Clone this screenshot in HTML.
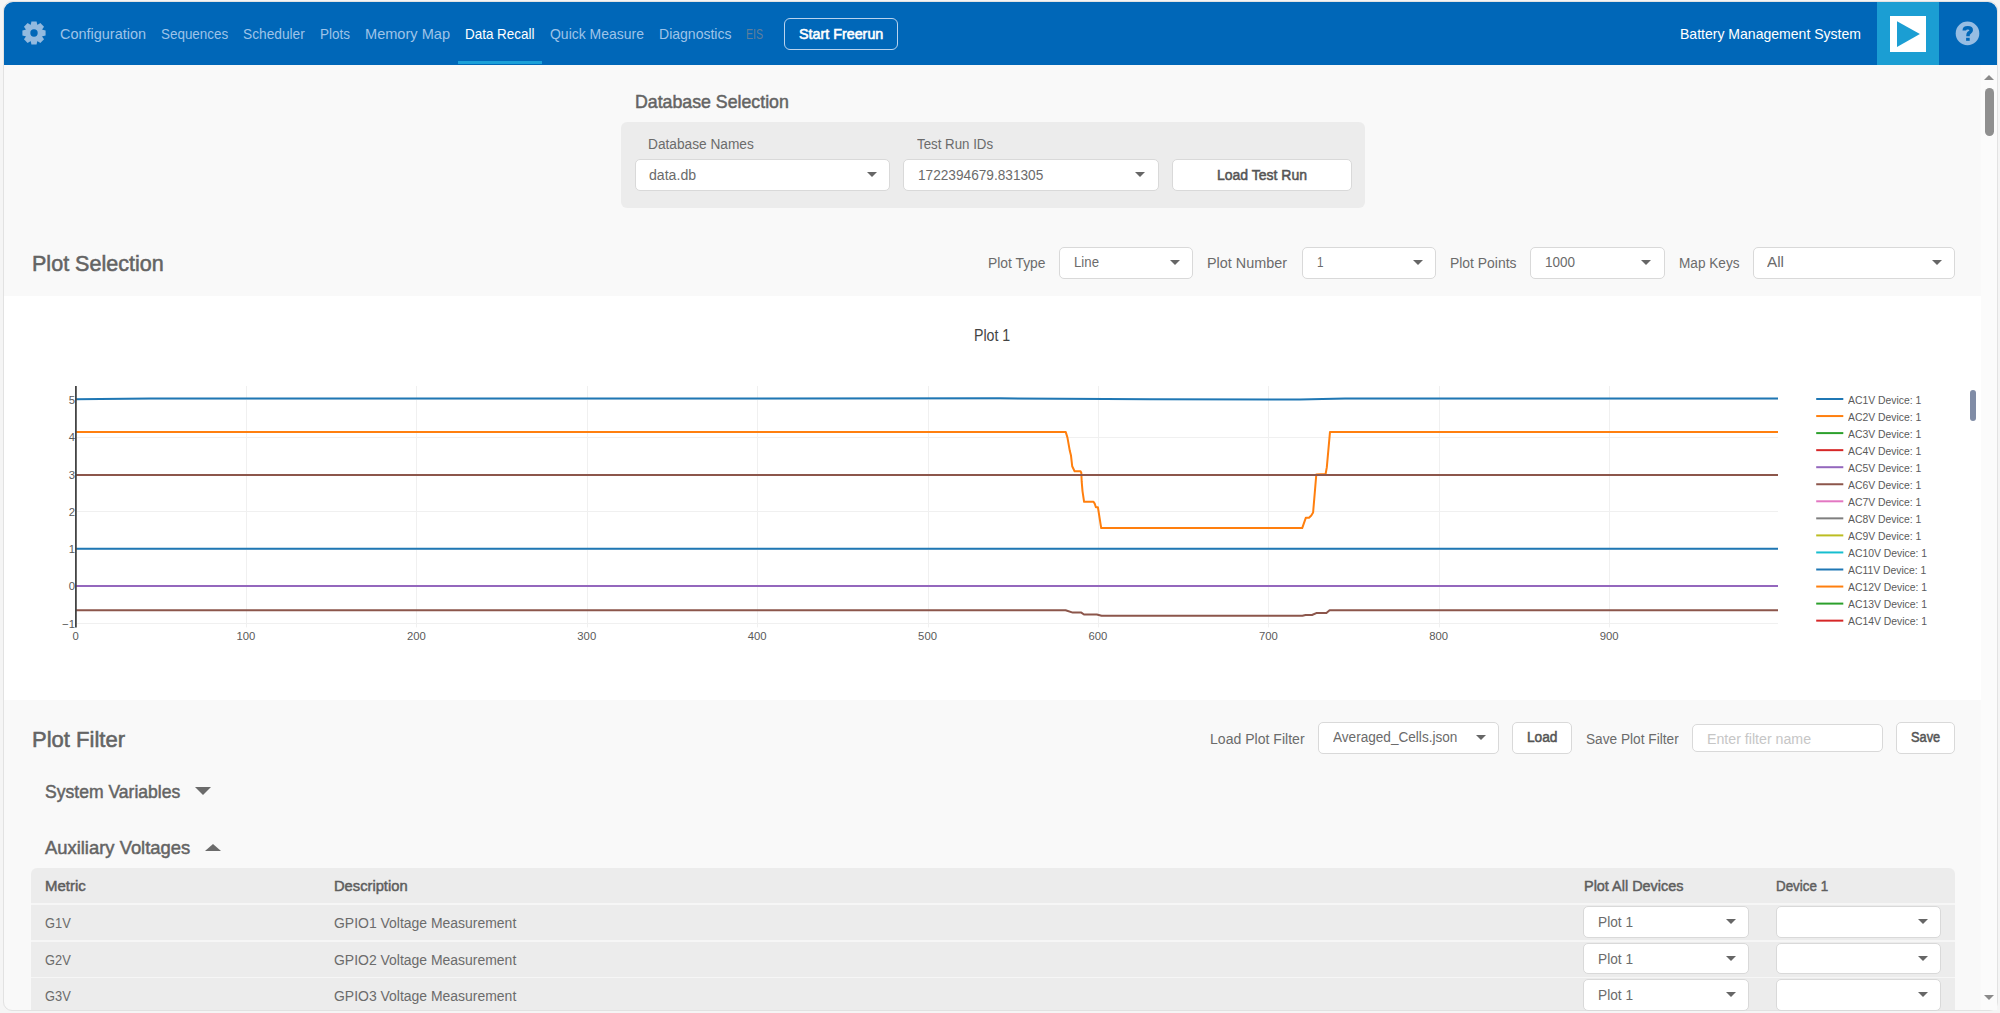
<!DOCTYPE html>
<html><head><meta charset="utf-8"><title>Battery Management System</title>
<style>
html,body{margin:0;padding:0;}
body{width:2000px;height:1013px;overflow:hidden;background:#f5f5f5;position:relative;font-family:"Liberation Sans",sans-serif;}
.t{position:absolute;white-space:nowrap;line-height:1;transform-origin:0 0;}
.r{position:absolute;}
svg{position:absolute;}
</style></head><body>

<div class="r" style="left:3px;top:1px;width:1995px;height:1010px;background:#f9f9f9;border:1px solid #e2e2e2;border-radius:9px;box-sizing:border-box;"></div>
<div class="r" style="left:4px;top:2px;width:1993px;height:63px;background:#0067b8;border-radius:9px 9px 0 0;"></div>
<svg style="left:19.5px;top:19.4px" width="28" height="28" viewBox="-14 -14 28 28">
<g fill="#93badf"><circle r="8.9"/><polygon points="3.40,-7.50 2.60,-11.60 -2.60,-11.60 -3.40,-7.50"/><polygon points="7.71,-2.90 10.04,-6.36 6.36,-10.04 2.90,-7.71"/><polygon points="7.50,3.40 11.60,2.60 11.60,-2.60 7.50,-3.40"/><polygon points="2.90,7.71 6.36,10.04 10.04,6.36 7.71,2.90"/><polygon points="-3.40,7.50 -2.60,11.60 2.60,11.60 3.40,7.50"/><polygon points="-7.71,2.90 -10.04,6.36 -6.36,10.04 -2.90,7.71"/><polygon points="-7.50,-3.40 -11.60,-2.60 -11.60,2.60 -7.50,3.40"/><polygon points="-2.90,-7.71 -6.36,-10.04 -10.04,-6.36 -7.71,-2.90"/></g><circle r="3.7" fill="#0067b8"/></svg>
<div class="t" style="left:60.00px;top:26.30px;font-size:15px;color:#9ec3e8;transform:scaleX(0.9638);">Configuration</div>
<div class="t" style="left:160.80px;top:26.30px;font-size:15px;color:#9ec3e8;transform:scaleX(0.8953);">Sequences</div>
<div class="t" style="left:243.00px;top:26.30px;font-size:15px;color:#9ec3e8;transform:scaleX(0.9149);">Scheduler</div>
<div class="t" style="left:320.00px;top:26.30px;font-size:15px;color:#9ec3e8;transform:scaleX(0.8996);">Plots</div>
<div class="t" style="left:365.00px;top:26.30px;font-size:15px;color:#9ec3e8;transform:scaleX(0.9712);">Memory Map</div>
<div class="t" style="left:465.10px;top:26.30px;font-size:15px;color:#ffffff;transform:scaleX(0.8951);">Data Recall</div>
<div class="t" style="left:549.50px;top:26.30px;font-size:15px;color:#9ec3e8;transform:scaleX(0.9319);">Quick Measure</div>
<div class="t" style="left:658.70px;top:26.30px;font-size:15px;color:#9ec3e8;transform:scaleX(0.9351);">Diagnostics</div>
<div class="t" style="left:746.40px;top:26.30px;font-size:15px;color:#5f7f9c;transform:scaleX(0.7073);">EIS</div>
<div class="r" style="left:457.6px;top:61px;width:84.39999999999998px;height:3px;background:#1ba0d8;"></div>
<div class="r" style="left:784px;top:18px;width:114px;height:32.2px;border:1.5px solid #b9d3ee;border-radius:6px;box-sizing:border-box;"></div>
<div class="t" style="left:799.00px;top:25.60px;font-size:15px;color:#ffffff;transform:scaleX(0.9539);-webkit-text-stroke:0.6px #ffffff;">Start Freerun</div>
<div class="t" style="left:1679.50px;top:26.30px;font-size:15px;color:#ffffff;transform:scaleX(0.9358);">Battery Management System</div>
<div class="r" style="left:1877px;top:2px;width:62.40000000000009px;height:63px;background:#1b9ed3;"></div>
<div class="r" style="left:1890px;top:16px;width:36px;height:36px;background:#ffffff;"></div>
<svg style="left:1890px;top:16px" width="36" height="36" viewBox="1890 16 36 36"><polygon points="1897,21.3 1919.9,33.9 1897,47.1" fill="#1b9ed3"/></svg>
<svg style="left:1953px;top:19px" width="30" height="30" viewBox="1953 19 30 30">
<circle cx="1967.5" cy="33.4" r="11.8" fill="#96bde3"/>
<path d="M1964.3,30.4 C1964.3,28.3 1965.9,27.8 1967.8,27.8 C1969.8,27.8 1971.2,28.7 1971.2,30.2 C1971.2,31.8 1969.9,32.3 1968.7,33.2 C1968.1,33.7 1968.0,34.5 1968.0,36.2" fill="none" stroke="#0067b8" stroke-width="3.6" stroke-linecap="butt"/>
<rect x="1966.1" y="37.8" width="3.6" height="3" fill="#0067b8"/>
</svg>
<div class="r" style="left:1981px;top:65px;width:16px;height:945px;background:#fbfbfb;"></div>
<div class="r" style="left:1984.00px;top:75.00px;width:0;height:0;border-left:5.10px solid transparent;border-right:5.10px solid transparent;border-bottom:5.80px solid #8a8a8a;"></div>
<div class="r" style="left:1985px;top:88.3px;width:9px;height:47.7px;background:#8f8f8f;border-radius:4.5px;"></div>
<div class="r" style="left:1984.00px;top:994.60px;width:0;height:0;border-left:5.10px solid transparent;border-right:5.10px solid transparent;border-top:5.80px solid #8a8a8a;"></div>
<div class="t" style="left:634.70px;top:92.54px;font-size:18.5px;color:#646464;transform:scaleX(0.9586);-webkit-text-stroke:0.5px #646464;">Database Selection</div>
<div class="r" style="left:621.2px;top:121.7px;width:743.5px;height:86.10000000000001px;background:#ececec;border-radius:6px;"></div>
<div class="t" style="left:648.20px;top:135.75px;font-size:15.3px;color:#6b6b6b;transform:scaleX(0.8950);">Database Names</div>
<div class="t" style="left:917.10px;top:135.75px;font-size:15.3px;color:#6b6b6b;transform:scaleX(0.8689);">Test Run IDs</div>
<div class="r" style="left:635px;top:159px;width:255px;height:32px;background:#fff;border:1px solid #d9d9d9;border-radius:5px;box-sizing:border-box;"></div>
<div class="t" style="left:648.70px;top:166.55px;font-size:15.3px;color:#6b6b6b;transform:scaleX(0.9227);">data.db</div>
<div class="r" style="left:866.75px;top:171.95px;width:0;height:0;border-left:5.25px solid transparent;border-right:5.25px solid transparent;border-top:5.70px solid #666;"></div>
<div class="r" style="left:903px;top:159px;width:256px;height:32px;background:#fff;border:1px solid #d9d9d9;border-radius:5px;box-sizing:border-box;"></div>
<div class="t" style="left:918.30px;top:166.55px;font-size:15.3px;color:#6b6b6b;transform:scaleX(0.8924);">1722394679.831305</div>
<div class="r" style="left:1135.05px;top:171.95px;width:0;height:0;border-left:5.25px solid transparent;border-right:5.25px solid transparent;border-top:5.70px solid #666;"></div>
<div class="r" style="left:1172px;top:159px;width:180px;height:32px;background:#fff;border:1px solid #d9d9d9;border-radius:5px;box-sizing:border-box;"></div>
<div class="t" style="left:1216.90px;top:166.55px;font-size:15.3px;color:#555555;transform:scaleX(0.9147);-webkit-text-stroke:0.55px #555555;">Load Test Run</div>
<div class="t" style="left:32.20px;top:251.70px;font-size:22.8px;color:#646464;transform:scaleX(0.9453);-webkit-text-stroke:0.55px #646464;">Plot Selection</div>
<div class="t" style="left:988.00px;top:254.75px;font-size:15.3px;color:#6b6b6b;transform:scaleX(0.9054);">Plot Type</div>
<div class="r" style="left:1059px;top:247px;width:134px;height:32px;background:#fff;border:1px solid #d9d9d9;border-radius:5px;box-sizing:border-box;"></div>
<div class="t" style="left:1073.60px;top:253.95px;font-size:15.3px;color:#6b6b6b;transform:scaleX(0.8642);">Line</div>
<div class="r" style="left:1170.45px;top:259.95px;width:0;height:0;border-left:5.25px solid transparent;border-right:5.25px solid transparent;border-top:5.70px solid #666;"></div>
<div class="t" style="left:1207.30px;top:254.75px;font-size:15.3px;color:#6b6b6b;transform:scaleX(0.9408);">Plot Number</div>
<div class="r" style="left:1302px;top:247px;width:134px;height:32px;background:#fff;border:1px solid #d9d9d9;border-radius:5px;box-sizing:border-box;"></div>
<div class="t" style="left:1317.00px;top:253.95px;font-size:15.3px;color:#6b6b6b;transform:scaleX(0.7639);">1</div>
<div class="r" style="left:1412.75px;top:259.95px;width:0;height:0;border-left:5.25px solid transparent;border-right:5.25px solid transparent;border-top:5.70px solid #666;"></div>
<div class="t" style="left:1449.80px;top:254.75px;font-size:15.3px;color:#6b6b6b;transform:scaleX(0.9092);">Plot Points</div>
<div class="r" style="left:1530px;top:247px;width:135px;height:32px;background:#fff;border:1px solid #d9d9d9;border-radius:5px;box-sizing:border-box;"></div>
<div class="t" style="left:1545.20px;top:253.95px;font-size:15.3px;color:#6b6b6b;transform:scaleX(0.8814);">1000</div>
<div class="r" style="left:1641.45px;top:259.95px;width:0;height:0;border-left:5.25px solid transparent;border-right:5.25px solid transparent;border-top:5.70px solid #666;"></div>
<div class="t" style="left:1678.50px;top:254.75px;font-size:15.3px;color:#6b6b6b;transform:scaleX(0.8893);">Map Keys</div>
<div class="r" style="left:1753px;top:247px;width:202px;height:32px;background:#fff;border:1px solid #d9d9d9;border-radius:5px;box-sizing:border-box;"></div>
<div class="t" style="left:1767.30px;top:253.95px;font-size:15.3px;color:#6b6b6b;transform:scaleX(0.9997);">All</div>
<div class="r" style="left:1931.75px;top:259.95px;width:0;height:0;border-left:5.25px solid transparent;border-right:5.25px solid transparent;border-top:5.70px solid #666;"></div>
<div class="r" style="left:4px;top:296px;width:1977px;height:404px;background:#ffffff;"></div>
<div class="t" style="left:974.00px;top:327.71px;font-size:15.7px;color:#444444;transform:scaleX(0.9029);">Plot 1</div>
<svg style="left:0;top:0" width="2000" height="1013" viewBox="0 0 2000 1013">
<line x1="76.6" y1="623.5" x2="1778" y2="623.5" stroke="#f0f0f0" stroke-width="1"/>
<line x1="76.6" y1="586.5" x2="1778" y2="586.5" stroke="#f0f0f0" stroke-width="1"/>
<line x1="76.6" y1="549.5" x2="1778" y2="549.5" stroke="#f0f0f0" stroke-width="1"/>
<line x1="76.6" y1="511.5" x2="1778" y2="511.5" stroke="#f0f0f0" stroke-width="1"/>
<line x1="76.6" y1="474.5" x2="1778" y2="474.5" stroke="#f0f0f0" stroke-width="1"/>
<line x1="76.6" y1="437.5" x2="1778" y2="437.5" stroke="#f0f0f0" stroke-width="1"/>
<line x1="76.6" y1="399.5" x2="1778" y2="399.5" stroke="#f0f0f0" stroke-width="1"/>
<line x1="246.5" y1="386" x2="246.5" y2="627.4" stroke="#f0f0f0" stroke-width="1"/>
<line x1="416.5" y1="386" x2="416.5" y2="627.4" stroke="#f0f0f0" stroke-width="1"/>
<line x1="587.5" y1="386" x2="587.5" y2="627.4" stroke="#f0f0f0" stroke-width="1"/>
<line x1="757.5" y1="386" x2="757.5" y2="627.4" stroke="#f0f0f0" stroke-width="1"/>
<line x1="928.5" y1="386" x2="928.5" y2="627.4" stroke="#f0f0f0" stroke-width="1"/>
<line x1="1098.5" y1="386" x2="1098.5" y2="627.4" stroke="#f0f0f0" stroke-width="1"/>
<line x1="1268.5" y1="386" x2="1268.5" y2="627.4" stroke="#f0f0f0" stroke-width="1"/>
<line x1="1439.5" y1="386" x2="1439.5" y2="627.4" stroke="#f0f0f0" stroke-width="1"/>
<line x1="1609.5" y1="386" x2="1609.5" y2="627.4" stroke="#f0f0f0" stroke-width="1"/>
<polyline points="75.6,399.3 150.0,398.6 1000.0,398.3 1150.0,399.2 1300.0,399.5 1345.0,398.6 1778.0,398.4" fill="none" stroke="#1f77b4" stroke-width="2" stroke-linejoin="round"/>
<polyline points="75.6,431.9 1065.7,431.9 1067.5,437.8 1069.8,450.8 1071.0,455.6 1072.2,466.2 1074.6,471.2 1080.5,471.2 1081.3,472.8 1081.7,481.7 1082.5,491.1 1084.1,501.8 1093.5,501.8 1094.7,503.6 1095.9,507.2 1097.9,507.2 1101.2,528.1 1302.2,528.1 1305.8,517.8 1309.0,517.8 1311.3,515.5 1313.1,512.5 1314.3,498.3 1316.3,474.5 1325.6,474.0 1326.8,467.4 1330.0,431.9 1778.0,431.9" fill="none" stroke="#ff7f0e" stroke-width="2" stroke-linejoin="round"/>
<polyline points="75.6,475.0 1778.0,475.0" fill="none" stroke="#8c564b" stroke-width="2" stroke-linejoin="round"/>
<polyline points="75.6,548.8 1778.0,548.8" fill="none" stroke="#1f77b4" stroke-width="2" stroke-linejoin="round"/>
<polyline points="75.6,585.9 1778.0,585.9" fill="none" stroke="#9467bd" stroke-width="2" stroke-linejoin="round"/>
<polyline points="75.6,610.2 1065.6,610.2 1072.8,612.6 1081.3,612.6 1084.0,614.5 1096.8,614.5 1101.6,615.8 1302.4,615.8 1305.6,615.0 1312.0,615.0 1316.8,612.9 1326.4,612.9 1329.6,610.2 1778.0,610.2" fill="none" stroke="#8c564b" stroke-width="2" stroke-linejoin="round"/>
<line x1="75.9" y1="386" x2="75.9" y2="627.5" stroke="#444444" stroke-width="1.8"/>
<line x1="1816.2" y1="399.00" x2="1843.3" y2="399.00" stroke="#1f77b4" stroke-width="2"/>
<line x1="1816.2" y1="416.05" x2="1843.3" y2="416.05" stroke="#ff7f0e" stroke-width="2"/>
<line x1="1816.2" y1="433.10" x2="1843.3" y2="433.10" stroke="#2ca02c" stroke-width="2"/>
<line x1="1816.2" y1="450.15" x2="1843.3" y2="450.15" stroke="#d62728" stroke-width="2"/>
<line x1="1816.2" y1="467.20" x2="1843.3" y2="467.20" stroke="#9467bd" stroke-width="2"/>
<line x1="1816.2" y1="484.25" x2="1843.3" y2="484.25" stroke="#8c564b" stroke-width="2"/>
<line x1="1816.2" y1="501.30" x2="1843.3" y2="501.30" stroke="#e377c2" stroke-width="2"/>
<line x1="1816.2" y1="518.35" x2="1843.3" y2="518.35" stroke="#7f7f7f" stroke-width="2"/>
<line x1="1816.2" y1="535.40" x2="1843.3" y2="535.40" stroke="#bcbd22" stroke-width="2"/>
<line x1="1816.2" y1="552.45" x2="1843.3" y2="552.45" stroke="#17becf" stroke-width="2"/>
<line x1="1816.2" y1="569.50" x2="1843.3" y2="569.50" stroke="#1f77b4" stroke-width="2"/>
<line x1="1816.2" y1="586.55" x2="1843.3" y2="586.55" stroke="#ff7f0e" stroke-width="2"/>
<line x1="1816.2" y1="603.60" x2="1843.3" y2="603.60" stroke="#2ca02c" stroke-width="2"/>
<line x1="1816.2" y1="620.65" x2="1843.3" y2="620.65" stroke="#d62728" stroke-width="2"/>
</svg>
<div class="t" style="left:62.12px;top:618.63px;font-size:11.3px;color:#5a5a5a;">−1</div>
<div class="t" style="left:68.72px;top:581.37px;font-size:11.3px;color:#5a5a5a;">0</div>
<div class="t" style="left:68.72px;top:544.11px;font-size:11.3px;color:#5a5a5a;">1</div>
<div class="t" style="left:68.72px;top:506.85px;font-size:11.3px;color:#5a5a5a;">2</div>
<div class="t" style="left:68.72px;top:469.59px;font-size:11.3px;color:#5a5a5a;">3</div>
<div class="t" style="left:68.72px;top:432.33px;font-size:11.3px;color:#5a5a5a;">4</div>
<div class="t" style="left:68.72px;top:395.07px;font-size:11.3px;color:#5a5a5a;">5</div>
<div class="t" style="left:72.46px;top:630.73px;font-size:11.3px;color:#5a5a5a;">0</div>
<div class="t" style="left:236.56px;top:630.73px;font-size:11.3px;color:#5a5a5a;">100</div>
<div class="t" style="left:406.95px;top:630.73px;font-size:11.3px;color:#5a5a5a;">200</div>
<div class="t" style="left:577.34px;top:630.73px;font-size:11.3px;color:#5a5a5a;">300</div>
<div class="t" style="left:747.73px;top:630.73px;font-size:11.3px;color:#5a5a5a;">400</div>
<div class="t" style="left:918.12px;top:630.73px;font-size:11.3px;color:#5a5a5a;">500</div>
<div class="t" style="left:1088.51px;top:630.73px;font-size:11.3px;color:#5a5a5a;">600</div>
<div class="t" style="left:1258.90px;top:630.73px;font-size:11.3px;color:#5a5a5a;">700</div>
<div class="t" style="left:1429.29px;top:630.73px;font-size:11.3px;color:#5a5a5a;">800</div>
<div class="t" style="left:1599.68px;top:630.73px;font-size:11.3px;color:#5a5a5a;">900</div>
<div class="t" style="left:1847.90px;top:394.73px;font-size:11.3px;color:#5a5a5a;transform:scaleX(0.9201);">AC1V Device: 1</div>
<div class="t" style="left:1847.90px;top:411.78px;font-size:11.3px;color:#5a5a5a;transform:scaleX(0.9201);">AC2V Device: 1</div>
<div class="t" style="left:1847.90px;top:428.83px;font-size:11.3px;color:#5a5a5a;transform:scaleX(0.9201);">AC3V Device: 1</div>
<div class="t" style="left:1847.90px;top:445.88px;font-size:11.3px;color:#5a5a5a;transform:scaleX(0.9201);">AC4V Device: 1</div>
<div class="t" style="left:1847.90px;top:462.93px;font-size:11.3px;color:#5a5a5a;transform:scaleX(0.9201);">AC5V Device: 1</div>
<div class="t" style="left:1847.90px;top:479.98px;font-size:11.3px;color:#5a5a5a;transform:scaleX(0.9201);">AC6V Device: 1</div>
<div class="t" style="left:1847.90px;top:497.03px;font-size:11.3px;color:#5a5a5a;transform:scaleX(0.9201);">AC7V Device: 1</div>
<div class="t" style="left:1847.90px;top:514.08px;font-size:11.3px;color:#5a5a5a;transform:scaleX(0.9201);">AC8V Device: 1</div>
<div class="t" style="left:1847.90px;top:531.13px;font-size:11.3px;color:#5a5a5a;transform:scaleX(0.9201);">AC9V Device: 1</div>
<div class="t" style="left:1847.90px;top:548.18px;font-size:11.3px;color:#5a5a5a;transform:scaleX(0.9201);">AC10V Device: 1</div>
<div class="t" style="left:1847.90px;top:565.23px;font-size:11.3px;color:#5a5a5a;transform:scaleX(0.9201);">AC11V Device: 1</div>
<div class="t" style="left:1847.90px;top:582.28px;font-size:11.3px;color:#5a5a5a;transform:scaleX(0.9201);">AC12V Device: 1</div>
<div class="t" style="left:1847.90px;top:599.33px;font-size:11.3px;color:#5a5a5a;transform:scaleX(0.9201);">AC13V Device: 1</div>
<div class="t" style="left:1847.90px;top:616.38px;font-size:11.3px;color:#5a5a5a;transform:scaleX(0.9201);">AC14V Device: 1</div>
<div class="r" style="left:1970.4px;top:390px;width:5.599999999999909px;height:30.80000000000001px;background:#808ca6;border-radius:3px;"></div>
<div class="t" style="left:32.20px;top:728.00px;font-size:22.8px;color:#646464;transform:scaleX(0.9658);-webkit-text-stroke:0.55px #646464;">Plot Filter</div>
<div class="t" style="left:1210.10px;top:730.95px;font-size:15.3px;color:#6b6b6b;transform:scaleX(0.9193);">Load Plot Filter</div>
<div class="r" style="left:1318px;top:722px;width:181px;height:32px;background:#fff;border:1px solid #d9d9d9;border-radius:5px;box-sizing:border-box;"></div>
<div class="t" style="left:1332.60px;top:729.05px;font-size:15.3px;color:#6b6b6b;transform:scaleX(0.8882);">Averaged_Cells.json</div>
<div class="r" style="left:1475.55px;top:735.15px;width:0;height:0;border-left:5.25px solid transparent;border-right:5.25px solid transparent;border-top:5.70px solid #666;"></div>
<div class="r" style="left:1512px;top:722px;width:60px;height:32px;background:#fff;border:1px solid #d9d9d9;border-radius:5px;box-sizing:border-box;"></div>
<div class="t" style="left:1527.00px;top:729.05px;font-size:15.3px;color:#555555;transform:scaleX(0.8961);-webkit-text-stroke:0.55px #555555;">Load</div>
<div class="t" style="left:1585.70px;top:730.95px;font-size:15.3px;color:#6b6b6b;transform:scaleX(0.8936);">Save Plot Filter</div>
<div class="r" style="left:1692px;top:724px;width:191px;height:28px;background:#fff;border:1px solid #d9d9d9;border-radius:5px;box-sizing:border-box;"></div>
<div class="t" style="left:1707.20px;top:731.25px;font-size:15.3px;color:#c6c6c6;transform:scaleX(0.9274);">Enter filter name</div>
<div class="r" style="left:1896px;top:722px;width:59px;height:32px;background:#fff;border:1px solid #d9d9d9;border-radius:5px;box-sizing:border-box;"></div>
<div class="t" style="left:1910.80px;top:729.05px;font-size:15.3px;color:#555555;transform:scaleX(0.8373);-webkit-text-stroke:0.55px #555555;">Save</div>
<div class="t" style="left:44.80px;top:781.92px;font-size:19px;color:#646464;transform:scaleX(0.9240);-webkit-text-stroke:0.5px #646464;">System Variables</div>
<div class="r" style="left:195.00px;top:787.00px;width:0;height:0;border-left:8.00px solid transparent;border-right:8.00px solid transparent;border-top:8.00px solid #6b6b6b;"></div>
<div class="t" style="left:44.80px;top:838.12px;font-size:19px;color:#646464;transform:scaleX(0.9682);-webkit-text-stroke:0.5px #646464;">Auxiliary Voltages</div>
<div class="r" style="left:204.90px;top:844.35px;width:0;height:0;border-left:8.00px solid transparent;border-right:8.00px solid transparent;border-bottom:7.70px solid #6b6b6b;"></div>
<div class="r" style="left:31px;top:868px;width:1924px;height:142.29999999999995px;background:#ececec;border-radius:6px 6px 0 0;"></div>
<div class="r" style="left:31px;top:903.4000000000001px;width:1924px;height:1.599999999999909px;background:#f6f6f6;"></div>
<div class="r" style="left:31px;top:940.1px;width:1924px;height:1.599999999999909px;background:#f6f6f6;"></div>
<div class="r" style="left:31px;top:976.7px;width:1924px;height:1.599999999999909px;background:#f6f6f6;"></div>
<div class="t" style="left:45.30px;top:878.25px;font-size:15.3px;color:#5e5e5e;transform:scaleX(0.9796);-webkit-text-stroke:0.5px #5e5e5e;">Metric</div>
<div class="t" style="left:333.60px;top:878.25px;font-size:15.3px;color:#5e5e5e;transform:scaleX(0.9617);-webkit-text-stroke:0.5px #5e5e5e;">Description</div>
<div class="t" style="left:1584.00px;top:878.05px;font-size:15.3px;color:#5e5e5e;transform:scaleX(0.9436);-webkit-text-stroke:0.5px #5e5e5e;">Plot All Devices</div>
<div class="t" style="left:1776.30px;top:878.05px;font-size:15.3px;color:#5e5e5e;transform:scaleX(0.8752);-webkit-text-stroke:0.5px #5e5e5e;">Device 1</div>
<div class="t" style="left:45.30px;top:915.15px;font-size:15.3px;color:#6b6b6b;transform:scaleX(0.8394);">G1V</div>
<div class="t" style="left:333.60px;top:915.15px;font-size:15.3px;color:#6b6b6b;transform:scaleX(0.9121);">GPIO1 Voltage Measurement</div>
<div class="r" style="left:1583px;top:906px;width:166px;height:32px;background:#fff;border:1px solid #d9d9d9;border-radius:5px;box-sizing:border-box;"></div>
<div class="t" style="left:1598.30px;top:914.15px;font-size:15.3px;color:#6b6b6b;transform:scaleX(0.8946);">Plot 1</div>
<div class="r" style="left:1725.75px;top:919.15px;width:0;height:0;border-left:5.25px solid transparent;border-right:5.25px solid transparent;border-top:5.70px solid #666;"></div>
<div class="r" style="left:1776px;top:906px;width:165px;height:32px;background:#fff;border:1px solid #d9d9d9;border-radius:5px;box-sizing:border-box;"></div>
<div class="r" style="left:1918.05px;top:919.15px;width:0;height:0;border-left:5.25px solid transparent;border-right:5.25px solid transparent;border-top:5.70px solid #666;"></div>
<div class="t" style="left:45.30px;top:951.55px;font-size:15.3px;color:#6b6b6b;transform:scaleX(0.8394);">G2V</div>
<div class="t" style="left:333.60px;top:951.55px;font-size:15.3px;color:#6b6b6b;transform:scaleX(0.9121);">GPIO2 Voltage Measurement</div>
<div class="r" style="left:1583px;top:943px;width:166px;height:31px;background:#fff;border:1px solid #d9d9d9;border-radius:5px;box-sizing:border-box;"></div>
<div class="t" style="left:1598.30px;top:950.55px;font-size:15.3px;color:#6b6b6b;transform:scaleX(0.8946);">Plot 1</div>
<div class="r" style="left:1725.75px;top:955.65px;width:0;height:0;border-left:5.25px solid transparent;border-right:5.25px solid transparent;border-top:5.70px solid #666;"></div>
<div class="r" style="left:1776px;top:943px;width:165px;height:31px;background:#fff;border:1px solid #d9d9d9;border-radius:5px;box-sizing:border-box;"></div>
<div class="r" style="left:1918.05px;top:955.65px;width:0;height:0;border-left:5.25px solid transparent;border-right:5.25px solid transparent;border-top:5.70px solid #666;"></div>
<div class="t" style="left:45.30px;top:987.95px;font-size:15.3px;color:#6b6b6b;transform:scaleX(0.8394);">G3V</div>
<div class="t" style="left:333.60px;top:987.95px;font-size:15.3px;color:#6b6b6b;transform:scaleX(0.9121);">GPIO3 Voltage Measurement</div>
<div class="r" style="left:1583px;top:979px;width:166px;height:32px;background:#fff;border:1px solid #d9d9d9;border-radius:5px;box-sizing:border-box;"></div>
<div class="t" style="left:1598.30px;top:986.95px;font-size:15.3px;color:#6b6b6b;transform:scaleX(0.8946);">Plot 1</div>
<div class="r" style="left:1725.75px;top:992.15px;width:0;height:0;border-left:5.25px solid transparent;border-right:5.25px solid transparent;border-top:5.70px solid #666;"></div>
<div class="r" style="left:1776px;top:979px;width:165px;height:32px;background:#fff;border:1px solid #d9d9d9;border-radius:5px;box-sizing:border-box;"></div>
<div class="r" style="left:1918.05px;top:992.15px;width:0;height:0;border-left:5.25px solid transparent;border-right:5.25px solid transparent;border-top:5.70px solid #666;"></div>
</body></html>
